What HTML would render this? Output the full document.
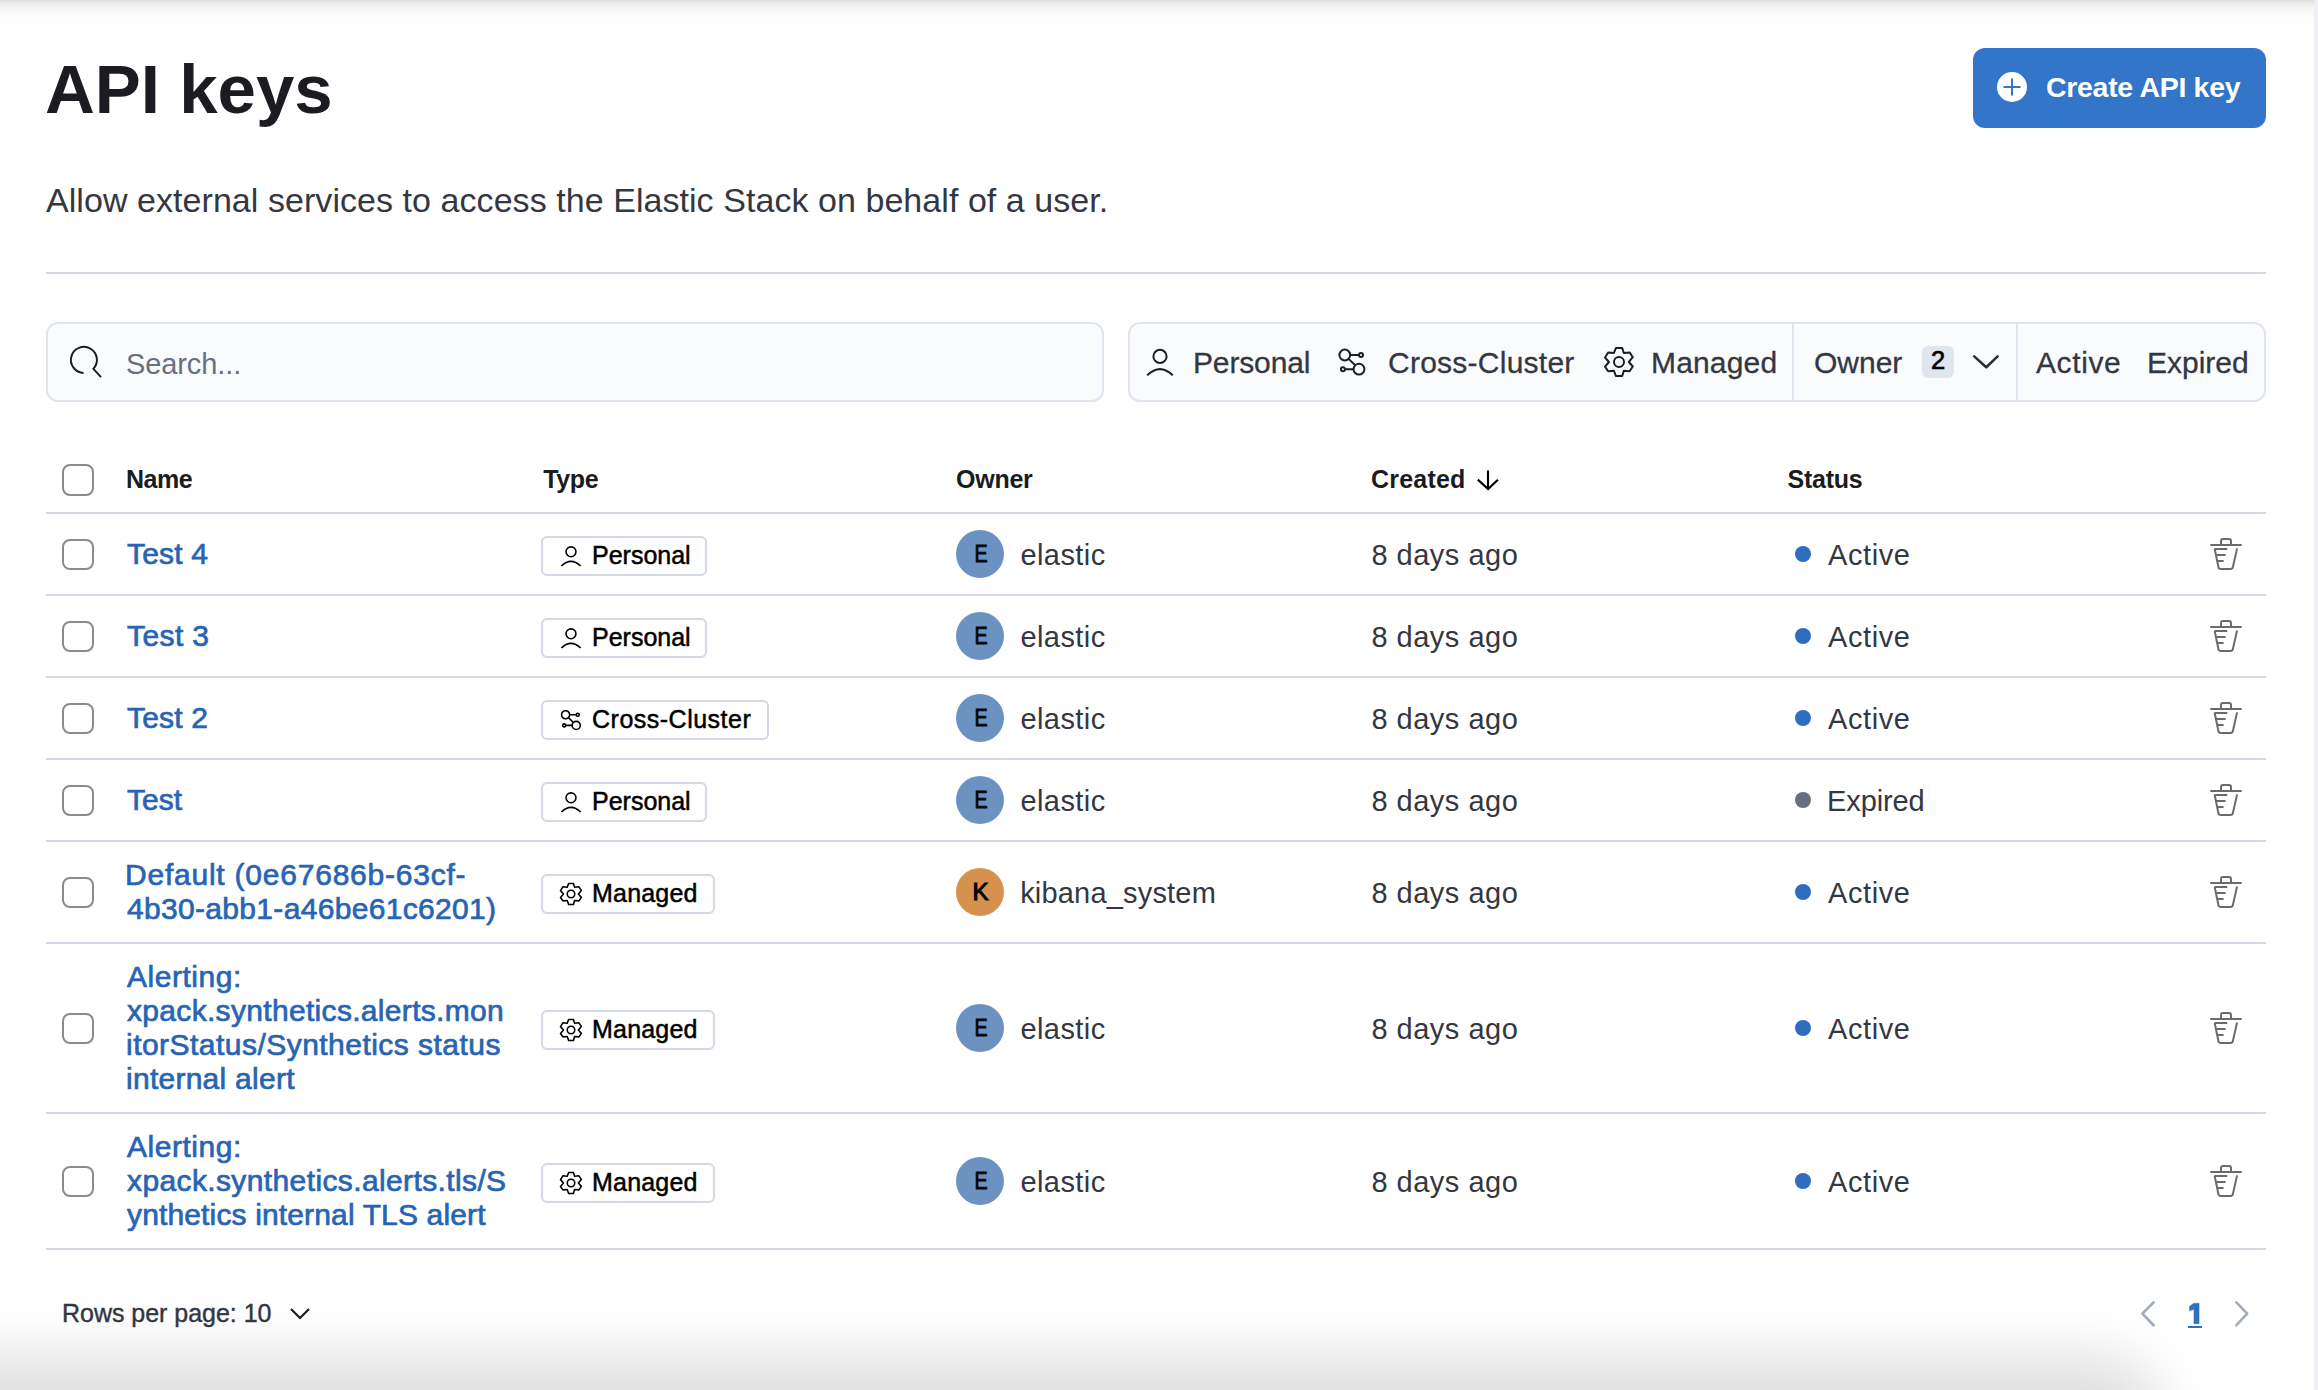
<!DOCTYPE html>
<html><head><meta charset="utf-8"><title>API keys</title><style>
*{box-sizing:border-box;margin:0;padding:0}
html,body{width:2318px;height:1390px;overflow:hidden;background:#fff}
body{font-family:"Liberation Sans",sans-serif;position:relative;color:#343741}
.a{position:absolute;white-space:nowrap;line-height:1}
.hr{position:absolute;height:2px;background:#d3d9e4}
.box{position:absolute;border:2px solid #e0e4ee;background:#fafbfd;border-radius:12px}
.sep{position:absolute;width:2px;background:#e0e4ee}
.cb{position:absolute;width:31.5px;height:31.5px;border:2.4px solid #8b8b8c;border-radius:8px;background:#fff}
.badge{position:absolute;height:40px;border:2px solid #d3d9e4;border-radius:6px;background:#fff}
.av{position:absolute;width:48px;height:48px;border-radius:50%}
.avl{position:absolute;width:48px;text-align:center;font-size:24px;line-height:1;color:#000;-webkit-text-stroke:0.8px #000;transform:scaleX(0.82)}
.dot{position:absolute;width:16px;height:16px;border-radius:50%}
.lnk{color:#2864b4;font-size:30px;-webkit-text-stroke:0.7px #2864b4}
.bt{font-size:25px;color:#000;-webkit-text-stroke:0.5px #000}
.cell{font-size:29px;color:#343741}
.flt{font-size:30px;color:#343741;-webkit-text-stroke:0.3px #343741}
.hd{font-size:25px;font-weight:bold;color:#1b1c21}
</style></head><body>
<div style="position:absolute;left:0;top:0;width:2318px;height:40px;background:linear-gradient(#dcdcdc 0,#ededed 4px,#f7f7f7 10px,#fcfcfc 18px,rgba(255,255,255,0) 36px)"></div>
<div style="position:absolute;left:2314px;top:0;width:4px;height:1390px;background:#eff0f3"></div>
<div id="title" class="a " style="left:45.00px;top:55px;font-size:69px;font-weight:bold;color:#1b1c21">API keys</div>
<div style="position:absolute;left:1973px;top:48px;width:293px;height:80px;border-radius:12px;background:#3375c9"></div>
<svg style="position:absolute;left:1997px;top:72px" width="30" height="30" viewBox="0 0 30 30"><circle cx="15" cy="15" r="15" fill="#fff"/><path d="M15 6.5v17M6.5 15h17" stroke="#3375c9" stroke-width="2"/></svg>
<div id="btntxt" class="a " style="left:2046.00px;top:73px;letter-spacing:-0.308px;font-size:28.5px;font-weight:bold;color:#fff">Create API key</div>
<div id="sub" class="a " style="left:46.00px;top:183px;letter-spacing:0.056px;font-size:34px;color:#343741">Allow external services to access the Elastic Stack on behalf of a user.</div>
<div class="hr" style="left:46px;top:272px;width:2220px"></div>
<div class="box" style="left:46px;top:322px;width:1058px;height:80px"></div>
<svg style="position:absolute;left:64px;top:340px" width="44" height="44" viewBox="0 0 44 44"><path d="M19.6 32.9A13 13 0 1 1 29.4 28.8L37 37.2" fill="none" stroke="#1d1e24" stroke-width="2"/></svg>
<div id="search" class="a " style="left:126.00px;top:350px;letter-spacing:-0.100px;font-size:29px;color:#69707d">Search...</div>
<div class="box" style="left:1128px;top:322px;width:1138px;height:80px"></div>
<div class="sep" style="left:1792px;top:323px;height:78px"></div>
<div class="sep" style="left:2016px;top:323px;height:78px"></div>
<svg style="position:absolute;left:1144px;top:345.5px" width="32" height="32" viewBox="0 0 32 32"><circle cx="16" cy="10.4" r="6.6" fill="none" stroke="#1d1e24" stroke-width="2"/><path d="M3.2 29.4Q16 16.8 28.8 29.4" fill="none" stroke="#1d1e24" stroke-width="2"/></svg>
<svg style="position:absolute;left:1336px;top:345.5px" width="32" height="32" viewBox="0 0 32 32"><g fill="none" stroke="#1d1e24" stroke-width="2"><circle cx="8.8" cy="9" r="5.4"/><circle cx="25" cy="9" r="2"/><circle cx="23" cy="23.2" r="5.4"/><circle cx="6.9" cy="23.2" r="2"/><path d="M14.2 9H23M8.9 23.2H17.6M12.6 12.9L19.2 19.3"/></g></svg>
<svg style="position:absolute;left:1603px;top:346px" width="32" height="32" viewBox="0 0 32 32"><path d="M12.87 2.11 L19.22 2.11 L20.78 6.98 L26.58 6.43 L29.80 11.22 L25.84 16.00 L29.80 20.51 L26.58 25.20 L20.78 24.74 L19.22 29.98 L12.87 29.98 L10.94 24.74 L5.14 25.20 L2.02 20.69 L5.97 16.00 L2.02 11.49 L5.14 6.43 L10.94 6.98Z" fill="none" stroke="#1d1e24" stroke-width="2" stroke-linejoin="round"/><circle cx="16" cy="16" r="5" fill="none" stroke="#1d1e24" stroke-width="2"/></svg>
<div id="fPersonal" class="a flt" style="left:1193.00px;top:348px;letter-spacing:-0.143px;">Personal</div>
<div id="fCross" class="a flt" style="left:1388.00px;top:348px;letter-spacing:0.250px;">Cross-Cluster</div>
<div id="fManaged" class="a flt" style="left:1651.00px;top:348px;letter-spacing:0.167px;">Managed</div>
<div id="fOwner" class="a flt" style="left:1814.00px;top:348px;">Owner</div>
<div style="position:absolute;left:1922px;top:346px;width:32px;height:32px;border-radius:6px;background:#e1e5ed"></div>
<div id="f2" class="a" style="left:1931px;top:348.2px;font-size:25.5px;color:#000;-webkit-text-stroke:0.7px #000">2</div>
<svg style="position:absolute;left:1970px;top:346px" width="32" height="32" viewBox="0 0 32 32"><path d="M4.2 10.4L16.3 21.2L27.6 10.4" fill="none" stroke="#2b2f38" stroke-width="2.6" stroke-linecap="round" stroke-linejoin="round"/></svg>
<div id="fActive" class="a flt" style="left:2036.00px;top:348px;letter-spacing:0.600px;">Active</div>
<div id="fExpired" class="a flt" style="left:2147.00px;top:348px;">Expired</div>
<div class="cb" style="left:62px;top:464px"></div>
<div id="hName" class="a hd" style="left:126.00px;top:467px;letter-spacing:-0.466px;">Name</div>
<div id="hType" class="a hd" style="left:543.20px;top:467px;letter-spacing:-0.333px;">Type</div>
<div id="hOwner" class="a hd" style="left:956.00px;top:467px;letter-spacing:-0.250px;">Owner</div>
<div id="hCreated" class="a hd" style="left:1371.00px;top:467px;letter-spacing:0.198px;">Created</div>
<div id="hStatus" class="a hd" style="left:1787.60px;top:467px;letter-spacing:-0.280px;">Status</div>
<svg style="position:absolute;left:1466px;top:462px" width="40" height="40" viewBox="0 0 40 40"><path d="M22 8.6V26.8M11.8 17.6L22.1 27L31.9 17.7" fill="none" stroke="#000" stroke-width="2.1"/></svg>
<div class="hr" style="left:46px;top:512px;width:2220px"></div>
<div class="hr" style="left:46px;top:594px;width:2220px"></div>
<div class="hr" style="left:46px;top:676px;width:2220px"></div>
<div class="hr" style="left:46px;top:758px;width:2220px"></div>
<div class="hr" style="left:46px;top:840px;width:2220px"></div>
<div class="hr" style="left:46px;top:942px;width:2220px"></div>
<div class="hr" style="left:46px;top:1112px;width:2220px"></div>
<div class="hr" style="left:46px;top:1248px;width:2220px"></div>
<div class="cb" style="left:62px;top:538.5px"></div>
<div id="n0_0" class="a lnk" style="left:127.00px;top:538.5px;letter-spacing:0.200px;">Test 4</div>
<div class="badge" style="left:541px;top:536.0px;width:166px"></div>
<svg style="position:absolute;left:559px;top:544.0px" width="24" height="24" viewBox="0 0 32 32"><circle cx="16" cy="10.4" r="6.6" fill="none" stroke="#000" stroke-width="2.1"/><path d="M3.2 29.4Q16 16.8 28.8 29.4" fill="none" stroke="#000" stroke-width="2.1"/></svg>
<div id="b0" class="a bt" style="left:592.00px;top:543.3px;">Personal</div>
<div class="av" style="left:956px;top:530.0px;background:#6b92c0"></div>
<div class="avl" style="left:956.5px;top:541.7px;">E</div>
<div id="o0" class="a cell" style="left:1020.40px;top:541.4px;letter-spacing:0.432px;">elastic</div>
<div id="d0" class="a cell" style="left:1371.40px;top:541.4px;letter-spacing:0.508px;">8 days ago</div>
<div class="dot" style="left:1795px;top:546.0px;background:#2f6dc1"></div>
<div id="s0" class="a cell" style="left:1828.00px;top:541.4px;letter-spacing:0.600px;">Active</div>
<svg style="position:absolute;left:2206px;top:534.0px" width="40" height="40" viewBox="0 0 40 40"><g fill="none" stroke="#6a6b6f" stroke-width="2"><path d="M4.3 10.9H35.7M15 10.9V7A2 2 0 0 1 17 5H23A2 2 0 0 1 25 7V10.9M8.6 15H21.3M10.4 20.9H19.6M11.8 26.9H17.6M8.6 14.5L12.4 33A2.5 2.5 0 0 0 14.8 35H24.5A2.5 2.5 0 0 0 26.9 33L31.1 14.4"/></g></svg>
<div class="cb" style="left:62px;top:620.5px"></div>
<div id="n1_0" class="a lnk" style="left:127.00px;top:620.5px;letter-spacing:0.400px;">Test 3</div>
<div class="badge" style="left:541px;top:618.0px;width:166px"></div>
<svg style="position:absolute;left:559px;top:626.0px" width="24" height="24" viewBox="0 0 32 32"><circle cx="16" cy="10.4" r="6.6" fill="none" stroke="#000" stroke-width="2.1"/><path d="M3.2 29.4Q16 16.8 28.8 29.4" fill="none" stroke="#000" stroke-width="2.1"/></svg>
<div id="b1" class="a bt" style="left:592.00px;top:625.3px;">Personal</div>
<div class="av" style="left:956px;top:612.0px;background:#6b92c0"></div>
<div class="avl" style="left:956.5px;top:623.7px;">E</div>
<div id="o1" class="a cell" style="left:1020.40px;top:623.4px;letter-spacing:0.432px;">elastic</div>
<div id="d1" class="a cell" style="left:1371.40px;top:623.4px;letter-spacing:0.508px;">8 days ago</div>
<div class="dot" style="left:1795px;top:628.0px;background:#2f6dc1"></div>
<div id="s1" class="a cell" style="left:1828.00px;top:623.4px;letter-spacing:0.600px;">Active</div>
<svg style="position:absolute;left:2206px;top:616.0px" width="40" height="40" viewBox="0 0 40 40"><g fill="none" stroke="#6a6b6f" stroke-width="2"><path d="M4.3 10.9H35.7M15 10.9V7A2 2 0 0 1 17 5H23A2 2 0 0 1 25 7V10.9M8.6 15H21.3M10.4 20.9H19.6M11.8 26.9H17.6M8.6 14.5L12.4 33A2.5 2.5 0 0 0 14.8 35H24.5A2.5 2.5 0 0 0 26.9 33L31.1 14.4"/></g></svg>
<div class="cb" style="left:62px;top:702.5px"></div>
<div id="n2_0" class="a lnk" style="left:127.00px;top:702.5px;letter-spacing:0.200px;">Test 2</div>
<div class="badge" style="left:541px;top:700.0px;width:228px"></div>
<svg style="position:absolute;left:559px;top:708.0px" width="24" height="24" viewBox="0 0 32 32"><g fill="none" stroke="#000" stroke-width="2.1"><circle cx="8.8" cy="9" r="5.4"/><circle cx="25" cy="9" r="2"/><circle cx="23" cy="23.2" r="5.4"/><circle cx="6.9" cy="23.2" r="2"/><path d="M14.2 9H23M8.9 23.2H17.6M12.6 12.9L19.2 19.3"/></g></svg>
<div id="b2" class="a bt" style="left:592.00px;top:707.3px;letter-spacing:0.500px;">Cross-Cluster</div>
<div class="av" style="left:956px;top:694.0px;background:#6b92c0"></div>
<div class="avl" style="left:956.5px;top:705.7px;">E</div>
<div id="o2" class="a cell" style="left:1020.40px;top:705.4px;letter-spacing:0.432px;">elastic</div>
<div id="d2" class="a cell" style="left:1371.40px;top:705.4px;letter-spacing:0.508px;">8 days ago</div>
<div class="dot" style="left:1795px;top:710.0px;background:#2f6dc1"></div>
<div id="s2" class="a cell" style="left:1828.00px;top:705.4px;letter-spacing:0.600px;">Active</div>
<svg style="position:absolute;left:2206px;top:698.0px" width="40" height="40" viewBox="0 0 40 40"><g fill="none" stroke="#6a6b6f" stroke-width="2"><path d="M4.3 10.9H35.7M15 10.9V7A2 2 0 0 1 17 5H23A2 2 0 0 1 25 7V10.9M8.6 15H21.3M10.4 20.9H19.6M11.8 26.9H17.6M8.6 14.5L12.4 33A2.5 2.5 0 0 0 14.8 35H24.5A2.5 2.5 0 0 0 26.9 33L31.1 14.4"/></g></svg>
<div class="cb" style="left:62px;top:784.5px"></div>
<div id="n3_0" class="a lnk" style="left:127.00px;top:784.5px;">Test</div>
<div class="badge" style="left:541px;top:782.0px;width:166px"></div>
<svg style="position:absolute;left:559px;top:790.0px" width="24" height="24" viewBox="0 0 32 32"><circle cx="16" cy="10.4" r="6.6" fill="none" stroke="#000" stroke-width="2.1"/><path d="M3.2 29.4Q16 16.8 28.8 29.4" fill="none" stroke="#000" stroke-width="2.1"/></svg>
<div id="b3" class="a bt" style="left:592.00px;top:789.3px;">Personal</div>
<div class="av" style="left:956px;top:776.0px;background:#6b92c0"></div>
<div class="avl" style="left:956.5px;top:787.7px;">E</div>
<div id="o3" class="a cell" style="left:1020.40px;top:787.4px;letter-spacing:0.432px;">elastic</div>
<div id="d3" class="a cell" style="left:1371.40px;top:787.4px;letter-spacing:0.508px;">8 days ago</div>
<div class="dot" style="left:1795px;top:792.0px;background:#69707d"></div>
<div id="s3" class="a cell" style="left:1827.00px;top:787.4px;letter-spacing:-0.099px;">Expired</div>
<svg style="position:absolute;left:2206px;top:780.0px" width="40" height="40" viewBox="0 0 40 40"><g fill="none" stroke="#6a6b6f" stroke-width="2"><path d="M4.3 10.9H35.7M15 10.9V7A2 2 0 0 1 17 5H23A2 2 0 0 1 25 7V10.9M8.6 15H21.3M10.4 20.9H19.6M11.8 26.9H17.6M8.6 14.5L12.4 33A2.5 2.5 0 0 0 14.8 35H24.5A2.5 2.5 0 0 0 26.9 33L31.1 14.4"/></g></svg>
<div class="cb" style="left:62px;top:876.5px"></div>
<div id="n4_0" class="a lnk" style="left:125.00px;top:859.5px;letter-spacing:0.774px;">Default (0e67686b-63cf-</div>
<div id="n4_1" class="a lnk" style="left:127.00px;top:893.5px;letter-spacing:0.317px;">4b30-abb1-a46be61c6201)</div>
<div class="badge" style="left:541px;top:874.0px;width:174px"></div>
<svg style="position:absolute;left:559px;top:882.0px" width="24" height="24" viewBox="0 0 32 32"><path d="M12.87 2.11 L19.22 2.11 L20.78 6.98 L26.58 6.43 L29.80 11.22 L25.84 16.00 L29.80 20.51 L26.58 25.20 L20.78 24.74 L19.22 29.98 L12.87 29.98 L10.94 24.74 L5.14 25.20 L2.02 20.69 L5.97 16.00 L2.02 11.49 L5.14 6.43 L10.94 6.98Z" fill="none" stroke="#000" stroke-width="2.1" stroke-linejoin="round"/><circle cx="16" cy="16" r="5" fill="none" stroke="#000" stroke-width="2.1"/></svg>
<div id="b4" class="a bt" style="left:592.00px;top:881.3px;letter-spacing:0.198px;">Managed</div>
<div class="av" style="left:956px;top:868.0px;background:#d6914f"></div>
<div class="avl" style="left:956.5px;top:879.7px;transform:none;-webkit-text-stroke:1px #000">K</div>
<div id="o4" class="a cell" style="left:1020.20px;top:879.4px;letter-spacing:0.182px;">kibana_system</div>
<div id="d4" class="a cell" style="left:1371.40px;top:879.4px;letter-spacing:0.508px;">8 days ago</div>
<div class="dot" style="left:1795px;top:884.0px;background:#2f6dc1"></div>
<div id="s4" class="a cell" style="left:1828.00px;top:879.4px;letter-spacing:0.600px;">Active</div>
<svg style="position:absolute;left:2206px;top:872.0px" width="40" height="40" viewBox="0 0 40 40"><g fill="none" stroke="#6a6b6f" stroke-width="2"><path d="M4.3 10.9H35.7M15 10.9V7A2 2 0 0 1 17 5H23A2 2 0 0 1 25 7V10.9M8.6 15H21.3M10.4 20.9H19.6M11.8 26.9H17.6M8.6 14.5L12.4 33A2.5 2.5 0 0 0 14.8 35H24.5A2.5 2.5 0 0 0 26.9 33L31.1 14.4"/></g></svg>
<div class="cb" style="left:62px;top:1012.5px"></div>
<div id="n5_0" class="a lnk" style="left:127.00px;top:961.5px;letter-spacing:0.525px;">Alerting:</div>
<div id="n5_1" class="a lnk" style="left:127.00px;top:995.5px;letter-spacing:0.319px;">xpack.synthetics.alerts.mon</div>
<div id="n5_2" class="a lnk" style="left:126.00px;top:1029.5px;letter-spacing:0.467px;">itorStatus/Synthetics status</div>
<div id="n5_3" class="a lnk" style="left:126.00px;top:1063.5px;letter-spacing:0.263px;">internal alert</div>
<div class="badge" style="left:541px;top:1010.0px;width:174px"></div>
<svg style="position:absolute;left:559px;top:1018.0px" width="24" height="24" viewBox="0 0 32 32"><path d="M12.87 2.11 L19.22 2.11 L20.78 6.98 L26.58 6.43 L29.80 11.22 L25.84 16.00 L29.80 20.51 L26.58 25.20 L20.78 24.74 L19.22 29.98 L12.87 29.98 L10.94 24.74 L5.14 25.20 L2.02 20.69 L5.97 16.00 L2.02 11.49 L5.14 6.43 L10.94 6.98Z" fill="none" stroke="#000" stroke-width="2.1" stroke-linejoin="round"/><circle cx="16" cy="16" r="5" fill="none" stroke="#000" stroke-width="2.1"/></svg>
<div id="b5" class="a bt" style="left:592.00px;top:1017.3px;letter-spacing:0.198px;">Managed</div>
<div class="av" style="left:956px;top:1004.0px;background:#6b92c0"></div>
<div class="avl" style="left:956.5px;top:1015.7px;">E</div>
<div id="o5" class="a cell" style="left:1020.40px;top:1015.4px;letter-spacing:0.432px;">elastic</div>
<div id="d5" class="a cell" style="left:1371.40px;top:1015.4px;letter-spacing:0.508px;">8 days ago</div>
<div class="dot" style="left:1795px;top:1020.0px;background:#2f6dc1"></div>
<div id="s5" class="a cell" style="left:1828.00px;top:1015.4px;letter-spacing:0.600px;">Active</div>
<svg style="position:absolute;left:2206px;top:1008.0px" width="40" height="40" viewBox="0 0 40 40"><g fill="none" stroke="#6a6b6f" stroke-width="2"><path d="M4.3 10.9H35.7M15 10.9V7A2 2 0 0 1 17 5H23A2 2 0 0 1 25 7V10.9M8.6 15H21.3M10.4 20.9H19.6M11.8 26.9H17.6M8.6 14.5L12.4 33A2.5 2.5 0 0 0 14.8 35H24.5A2.5 2.5 0 0 0 26.9 33L31.1 14.4"/></g></svg>
<div class="cb" style="left:62px;top:1165.5px"></div>
<div id="n6_0" class="a lnk" style="left:127.00px;top:1131.5px;letter-spacing:0.525px;">Alerting:</div>
<div id="n6_1" class="a lnk" style="left:127.00px;top:1165.5px;letter-spacing:0.381px;">xpack.synthetics.alerts.tls/S</div>
<div id="n6_2" class="a lnk" style="left:127.00px;top:1199.5px;letter-spacing:0.143px;">ynthetics internal TLS alert</div>
<div class="badge" style="left:541px;top:1163.0px;width:174px"></div>
<svg style="position:absolute;left:559px;top:1171.0px" width="24" height="24" viewBox="0 0 32 32"><path d="M12.87 2.11 L19.22 2.11 L20.78 6.98 L26.58 6.43 L29.80 11.22 L25.84 16.00 L29.80 20.51 L26.58 25.20 L20.78 24.74 L19.22 29.98 L12.87 29.98 L10.94 24.74 L5.14 25.20 L2.02 20.69 L5.97 16.00 L2.02 11.49 L5.14 6.43 L10.94 6.98Z" fill="none" stroke="#000" stroke-width="2.1" stroke-linejoin="round"/><circle cx="16" cy="16" r="5" fill="none" stroke="#000" stroke-width="2.1"/></svg>
<div id="b6" class="a bt" style="left:592.00px;top:1170.3px;letter-spacing:0.198px;">Managed</div>
<div class="av" style="left:956px;top:1157.0px;background:#6b92c0"></div>
<div class="avl" style="left:956.5px;top:1168.7px;">E</div>
<div id="o6" class="a cell" style="left:1020.40px;top:1168.4px;letter-spacing:0.432px;">elastic</div>
<div id="d6" class="a cell" style="left:1371.40px;top:1168.4px;letter-spacing:0.508px;">8 days ago</div>
<div class="dot" style="left:1795px;top:1173.0px;background:#2f6dc1"></div>
<div id="s6" class="a cell" style="left:1828.00px;top:1168.4px;letter-spacing:0.600px;">Active</div>
<svg style="position:absolute;left:2206px;top:1161.0px" width="40" height="40" viewBox="0 0 40 40"><g fill="none" stroke="#6a6b6f" stroke-width="2"><path d="M4.3 10.9H35.7M15 10.9V7A2 2 0 0 1 17 5H23A2 2 0 0 1 25 7V10.9M8.6 15H21.3M10.4 20.9H19.6M11.8 26.9H17.6M8.6 14.5L12.4 33A2.5 2.5 0 0 0 14.8 35H24.5A2.5 2.5 0 0 0 26.9 33L31.1 14.4"/></g></svg>
<div id="rpp" class="a " style="left:62.00px;top:1301px;letter-spacing:-0.025px;font-size:25px;color:#343741;-webkit-text-stroke:0.4px #343741">Rows per page: 10</div>
<svg style="position:absolute;left:286px;top:1300px" width="28" height="28" viewBox="0 0 28 28"><path d="M5 9L14 18L23 9" fill="none" stroke="#1d1e24" stroke-width="2.2"/></svg>
<svg style="position:absolute;left:2134px;top:1298px" width="28" height="32" viewBox="0 0 28 32"><path d="M19.6 4.4L8.4 15.6L19.6 27.2" fill="none" stroke="#a2abba" stroke-width="2.7" stroke-linecap="round" stroke-linejoin="round"/></svg>
<svg style="position:absolute;left:2186px;top:1300px" width="20" height="30" viewBox="0 0 20 30"><path d="M7.9 3.3H13.1V23.7H7.9V9.3L3.5 11.1V6.2Z" fill="#2f6fc4" stroke="#2f6fc4" stroke-width="0.4" stroke-linejoin="round"/></svg>
<div style="position:absolute;left:2188px;top:1326px;width:14px;height:2px;background:#2f6fc4"></div>
<svg style="position:absolute;left:2228px;top:1298px" width="28" height="32" viewBox="0 0 28 32"><path d="M8.4 4.4L19.2 15.6L8.4 27.2" fill="none" stroke="#a2abba" stroke-width="2.7" stroke-linecap="round" stroke-linejoin="round"/></svg>
<div style="position:absolute;left:0;top:0;width:2318px;height:1390px;overflow:hidden;pointer-events:none"><div style="position:absolute;left:-300px;top:1395px;width:2423px;height:400px;border-radius:0 22px 0 0;background:#e0e0e0;box-shadow:0 0 62px 37px rgba(0,0,0,0.139)"></div></div>
</body></html>
